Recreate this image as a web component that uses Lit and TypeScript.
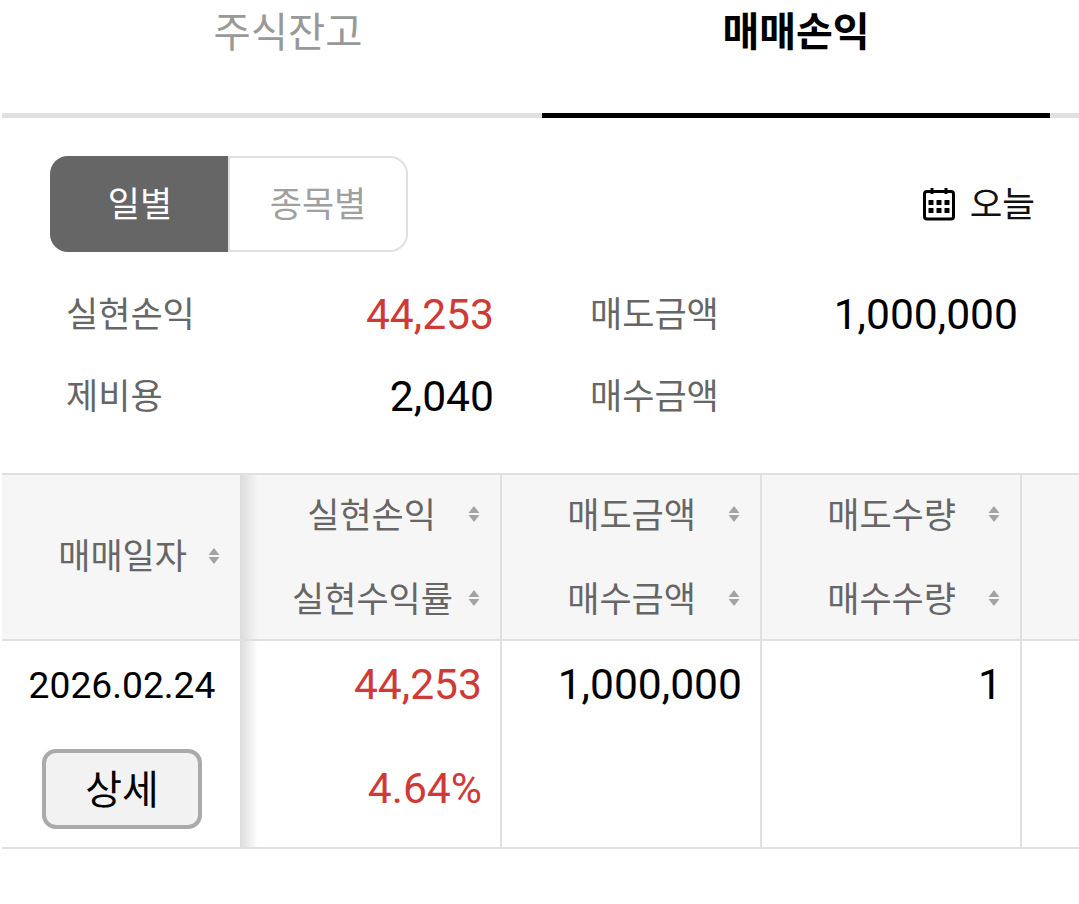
import { LitElement, css, html } from 'lit';
import { customElement } from 'lit/decorators.js';

const sortIcon = html`<svg class="sort" width="12" height="18" viewBox="0 0 12 18">
    <path d="M6 1 L11.5 8 H0.5 Z M0.5 10 H11.5 L6 17 Z" fill="#a3a3a3"></path>
</svg>`;

const calendarIcon = html`<svg class="cal" width="34" height="34" viewBox="0 0 34 34" fill="none">
    <rect x="2.5" y="4.5" width="29" height="27.5" rx="2.5" stroke="#000" stroke-width="3"></rect>
    <path d="M10 1 V7 M24 1 V7" stroke="#000" stroke-width="3"></path>
    <path d="M6.5 13 h5 v5 h-5 z M14.5 13 h5 v5 h-5 z M22.5 13 h5 v5 h-5 z M6.5 21 h5 v5 h-5 z M14.5 21 h5 v5 h-5 z M22.5 21 h5 v5 h-5 z" fill="#000"></path>
</svg>`;

@customElement('app-root')
export class AppRoot extends LitElement {
    private headCell(label: string) {
        return html`<div class="head-item"><span>${label}</span>${sortIcon}</div>`;
    }

    render() {
        return html`
        <div class="page">
            <div class="tabs">
                <div class="tab">주식잔고</div>
                <div class="tab active">매매손익</div>
            </div>

            <div class="toolbar">
                <div class="segment">
                    <div class="seg on">일별</div>
                    <div class="seg">종목별</div>
                </div>
                <div class="today">${calendarIcon}<span>오늘</span></div>
            </div>

            <div class="summary">
                <div class="pair"><span class="key">실현손익</span><span class="num red">44,253</span></div>
                <div class="pair right"><span class="key">매도금액</span><span class="num">1,000,000</span></div>
                <div class="pair"><span class="key">제비용</span><span class="num">2,040</span></div>
                <div class="pair right"><span class="key">매수금액</span><span class="num"></span></div>
            </div>

            <div class="table">
                <div class="row head">
                    <div class="cell fixed center">${this.headCell('매매일자')}</div>
                    <div class="cell first">${this.headCell('실현손익')}${this.headCell('실현수익률')}</div>
                    <div class="cell">${this.headCell('매도금액')}${this.headCell('매수금액')}</div>
                    <div class="cell">${this.headCell('매도수량')}${this.headCell('매수수량')}</div>
                    <div class="cell rest"></div>
                </div>
                <div class="row body">
                    <div class="cell fixed date">
                        <div>2026.02.24</div>
                        <button class="detail">상세</button>
                    </div>
                    <div class="cell first values">
                        <div class="red">44,253</div>
                        <div class="red">4.64%</div>
                    </div>
                    <div class="cell values"><div>1,000,000</div></div>
                    <div class="cell values"><div>1</div></div>
                    <div class="cell rest"></div>
                </div>
            </div>
        </div>
        `;
    }

    static override styles = css`
        :host {
            display: block;
            width: 1079px;
            height: 904px;
            background: #fff;
            font-family: Roboto, "Noto Sans CJK KR", sans-serif;
            overflow: hidden;
        }

        .page {
            padding-left: 2px;
        }

        .tabs {
            display: grid;
            grid-template-columns: 540px 508px;
            height: 118px;
            border-bottom: 5px solid #e0e0e0;
            box-sizing: border-box;
        }

        .tab {
            height: 118px;
            box-sizing: border-box;
            padding-left: 32px;
            text-align: center;
            font-size: 40.5px;
            line-height: 66px;
            color: #999;
        }

        .tab.active {
            padding-left: 0;
            font-size: 40px;
            color: #000;
            font-weight: 700;
            border-bottom: 5px solid #000;
        }

        .toolbar {
            display: flex;
            justify-content: space-between;
            align-items: center;
            margin-top: 38px;
            padding: 0 44px 0 48px;
        }

        .segment {
            display: flex;
            width: 358px;
            height: 96px;
        }

        .seg {
            flex: 1;
            display: flex;
            align-items: center;
            justify-content: center;
            box-sizing: border-box;
            padding-bottom: 6px;
            font-size: 35px;
            color: #a0a0a0;
            border: 2px solid #e0e0e0;
            border-left: none;
            border-radius: 0 18px 18px 0;
        }

        .seg.on {
            background: #666;
            color: #fff;
            border: none;
            border-radius: 18px 0 0 18px;
            flex: 0 0 180px;
            padding-left: 2px;
            border-right: 2px solid #e0e0e0;
        }

        .today {
            display: flex;
            align-items: center;
            gap: 14px;
            font-size: 35.5px;
            color: #111;
        }

        .today span {
            padding-bottom: 6px;
        }

        .summary {
            display: grid;
            grid-template-columns: 492px 524px;
            grid-auto-rows: 82px;
            margin-top: 21px;
        }

        .pair {
            display: flex;
            justify-content: space-between;
            align-items: center;
            padding-left: 64px;
        }

        .pair.right {
            padding-left: 96px;
        }

        .key {
            padding-bottom: 6px;
            font-size: 35px;
            color: #666;
        }

        .num {
            font-size: 42.6px;
            color: #000;
        }

        .red {
            color: #d03a36;
        }

        .table {
            margin-top: 36px;
        }

        .row {
            display: grid;
            grid-template-columns: 238px 262px 260px 260px 1fr;
        }

        .row.head {
            height: 168px;
            background: #f6f6f6;
            border-top: 2px solid #e0e0e0;
            border-bottom: 2px solid #e0e0e0;
            box-sizing: border-box;
        }

        .row.body {
            height: 208px;
            border-bottom: 2px solid #e0e0e0;
            box-sizing: border-box;
        }

        .cell {
            position: relative;
            box-sizing: border-box;
            border-right: 2px solid #e0e0e0;
            padding: 0 20px 0 0;
        }

        .cell.rest {
            border-right: none;
        }

        .cell.fixed {
            border-right: none;
            padding: 0;
        }

        .cell.first::before {
            content: '';
            position: absolute;
            left: 0;
            top: 0;
            bottom: 0;
            width: 18px;
            background: linear-gradient(to right, #dcdcdc, rgba(220, 220, 220, 0));
        }

        .head .cell {
            display: flex;
            flex-direction: column;
            justify-content: center;
            gap: 26px;
        }

        .head-item {
            display: flex;
            justify-content: flex-end;
            align-items: center;
            gap: 32px;
            height: 58px;
            padding-bottom: 2px;
            box-sizing: border-box;
            font-size: 35px;
            color: #666;
        }

        .head-item span {
            padding-bottom: 4px;
        }

        .head .first .head-item:last-child {
            gap: 15px;
        }

        .center .head-item {
            gap: 21px;
            padding-right: 20px;
        }

        .center .head-item span {
            padding-bottom: 6px;
        }

        .cell.values {
            display: flex;
            flex-direction: column;
            align-items: flex-end;
            font-size: 42.6px;
            color: #000;
            padding-top: 15px;
            padding-right: 18px;
            gap: 48px;
            line-height: 56px;
        }

        .cell.date {
            display: flex;
            flex-direction: column;
            align-items: center;
            font-size: 37.2px;
            padding-top: 17px;
            padding-left: 2px;
            color: #000;
            line-height: 54px;
        }

        .detail {
            margin-top: 37px;
            width: 160px;
            height: 80px;
            box-sizing: border-box;
            background: #f2f2f2;
            border: 4px solid #aaa;
            border-radius: 14px;
            font-family: inherit;
            font-size: 40px;
            color: #000;
            padding: 0 0 5px;
        }
    `;
}

declare global {
    interface HTMLElementTagNameMap {
        'app-root': AppRoot;
    }
}
